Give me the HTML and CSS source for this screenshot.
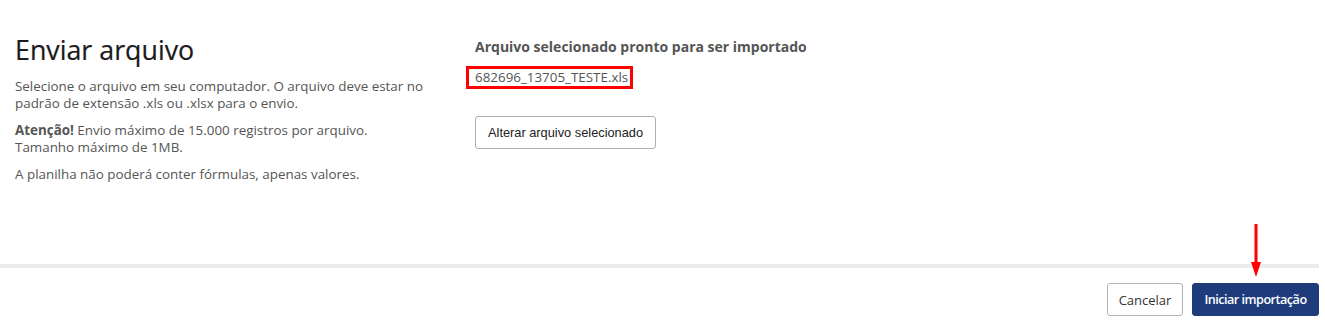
FILE: index.html
```html
<!DOCTYPE html>
<html lang="pt-BR">
<head>
<meta charset="UTF-8">
<meta name="viewport" content="width=device-width, initial-scale=1.0">
<title>Enviar arquivo</title>
<link rel="stylesheet" href="styles.css">
</head>
<body>
<div id="page">
    <div id="upload">
        <div class="info">
            <h1>Enviar arquivo</h1>
            <p>Selecione o arquivo em seu computador. O arquivo deve estar no padrão de extensão .xls ou .xlsx para o envio.</p>
            <p><strong>Atenção!</strong> Envio máximo de 15.000 registros por arquivo.<br>Tamanho máximo de 1MB.</p>
            <p>A planilha não poderá conter fórmulas, apenas valores.</p>
        </div>
        <div class="selected">
            <p class="selected-title">Arquivo selecionado pronto para ser importado</p>
            <div class="file-row">
                <span class="file-name">682696_13705_TESTE.xls</span>
            </div>
            <button class="btn-change">Alterar arquivo selecionado</button>
        </div>
    </div>
    <div id="footer">
        <button class="btn btn-cancel">Cancelar</button>
        <button class="btn btn-primary">Iniciar importação</button>
        <svg class="arrow" width="14" height="54" viewBox="0 0 14 54">
            <rect x="5.5" y="0" width="3" height="40" fill="#f00"/>
            <polygon points="2,38 12,38 7,53" fill="#f00"/>
        </svg>
    </div>
</div>
</body>
</html>
```

FILE: styles.css
```css
body {
    margin: 0;
    font-family: "Open Sans", sans-serif;
    background: #fff;
}
#page {
    width: 1319px;
    position: relative;
}
#upload {
    display: grid;
    grid-template-columns: 430px 1fr;
    column-gap: 30px;
    height: 264px;
    box-sizing: border-box;
    padding: 33px 15px 0 15px;
}
.info h1 {
    margin: 0 0 11px 0;
    font-size: 26.8px;
    font-weight: 400;
    line-height: 34px;
    color: #1a1a1a;
    -webkit-text-stroke: 0.2px #1a1a1a;
}
.info p {
    margin: 0 0 10px 0;
    font-size: 13.4px;
    line-height: 17px;
    color: #555;
}
.info strong {
    font-weight: 700;
}
.selected {
    padding-top: 5px;
}
.selected-title {
    margin: 0;
    font-size: 14px;
    font-weight: 700;
    line-height: 17px;
    color: #555;
}
.file-row {
    margin-top: 10px;
}
.file-name {
    display: inline-block;
    margin-left: -9px;
    padding: 0 2px 0 6px;
    border: 3px solid #f00;
    font-size: 13.4px;
    line-height: 17px;
    color: #555;
}
.btn-change {
    display: block;
    margin-top: 27px;
    height: 33px;
    padding: 0 12px;
    background: #fff;
    border: 1px solid #adadad;
    border-radius: 3px;
    font-family: "Liberation Sans", Arial, sans-serif;
    font-size: 12.8px;
    color: #222;
}
#footer {
    border-top: 4px solid #ebebeb;
    display: flex;
    justify-content: flex-end;
    gap: 9px;
    padding-top: 15px;
    height: 62px;
}
.btn {
    height: 33px;
    border-radius: 3px;
    font-family: "Open Sans", sans-serif;
    font-size: 13px;
}
.btn-cancel {
    width: 76px;
    background: #fff;
    border: 1px solid #b3b3b3;
    color: #333;
}
.btn-primary {
    width: 127px;
    background: #1e3c7c;
    border: 1px solid #1e3c7c;
    color: #fff;
    font-size: 12.6px;
    font-weight: 600;
    letter-spacing: -0.5px;
}
.arrow {
    position: absolute;
    left: 1249px;
    top: 224px;
}
```
